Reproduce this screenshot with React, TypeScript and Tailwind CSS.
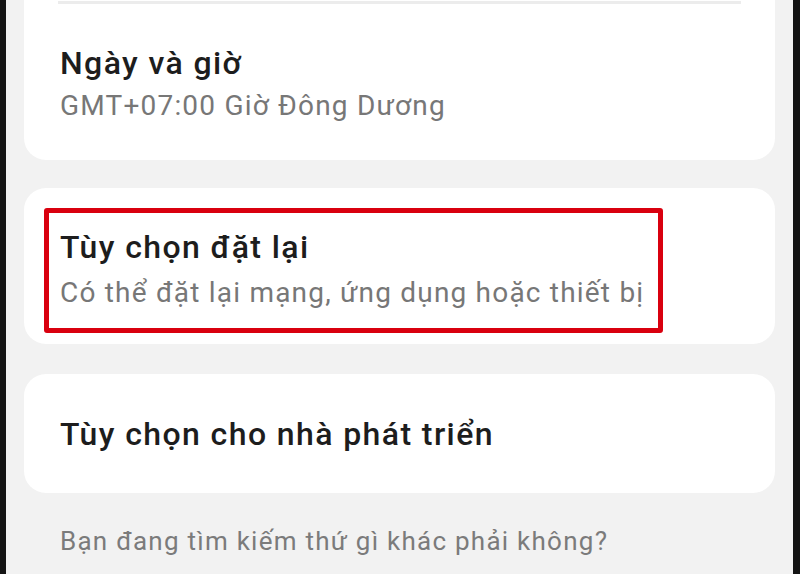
import React from 'react'

const font = { fontFamily: 'Roboto, "Noto Sans", sans-serif' }

function Title({ children }: { children: React.ReactNode }) {
  return <div className="text-[32px] leading-[40px] font-medium tracking-[1.4px] text-[#1d1d1d]">{children}</div>
}

function Sub({ children, className = '' }: { children: React.ReactNode; className?: string }) {
  return <div className={`text-[28px] leading-[38px] tracking-[1.2px] text-[#777777] ${className}`}>{children}</div>
}

export default function App() {
  return (
    <div className="flex h-[574px] w-[800px] overflow-hidden bg-[#111]" style={font}>
      <div className="w-[6px] bg-[#141414]" />
      <div className="flex flex-1 flex-col bg-[#f2f2f2] px-[18px]">
        {/* bottom of the previous group, its top is scrolled off */}
        <div className="h-[160px] rounded-b-[22px] bg-white">
          <div className="mx-[34px] mt-[1px] h-[3px] bg-[#ececec]" />
          <div className="pl-[36px] pt-[39px]">
            <Title>Ngày và giờ</Title>
            <Sub className="mt-[4px]">GMT+07:00 Giờ Đông Dương</Sub>
          </div>
        </div>

        <div className="mt-[28px] h-[156px] rounded-[22px] bg-white p-[20px]">
          <div className="h-[125px] w-[619px] rounded-[3px] border-[5px] border-[#d9000f] pl-[11px] pt-[14px]">
            <Title>Tùy chọn đặt lại</Title>
            <Sub className="mt-[7px]">Có thể đặt lại mạng, ứng dụng hoặc thiết bị</Sub>
          </div>
        </div>

        <div className="mt-[30px] flex h-[119px] items-center rounded-[22px] bg-white pl-[36px]">
          <Title>Tùy chọn cho nhà phát triển</Title>
        </div>

        <div className="pl-[36px] pt-[30px] text-[26px] leading-[36px] tracking-[1.25px] text-[#7b7b7b]">
          Bạn đang tìm kiếm thứ gì khác phải không?
        </div>
      </div>
      <div className="w-[7px] bg-[#141414]" />
    </div>
  )
}
